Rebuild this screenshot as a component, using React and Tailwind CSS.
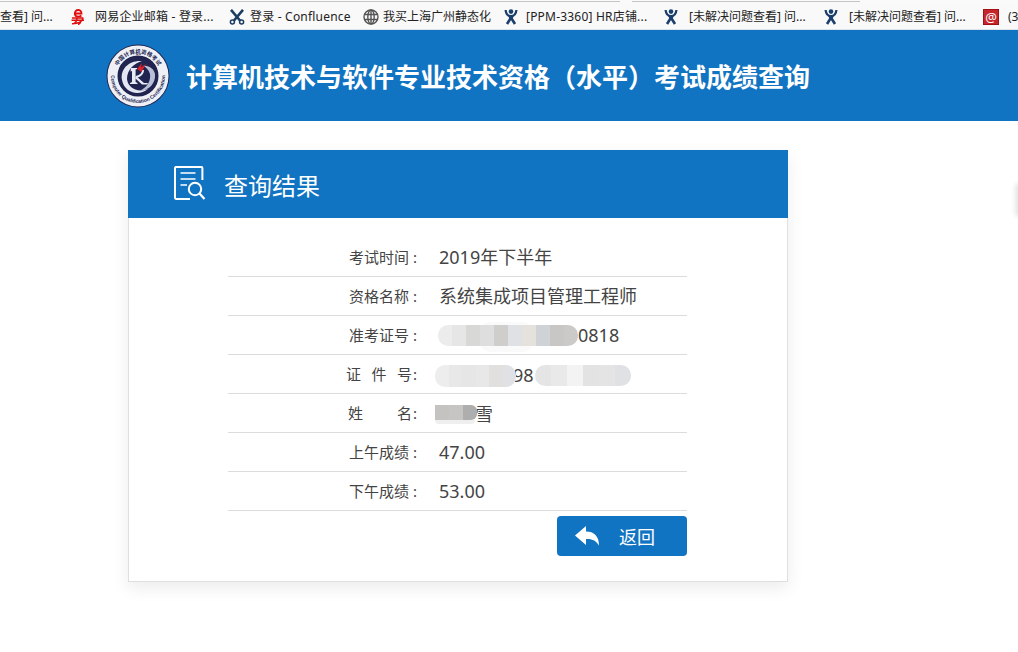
import React from "react";

const FONT = { fontFamily: '"Noto Sans", "Noto Sans CJK SC", sans-serif' };

function JiraIcon() {
  return (
    <svg width="14" height="16" viewBox="0 0 14 16">
      <circle cx="7" cy="2.6" r="2.3" fill="#1a3f6e" />
      <path d="M1.6 1 C2 5 4 7.2 7 7.2 C10 7.2 12 5 12.4 1" fill="none" stroke="#1a3f6e" strokeWidth="2.3" />
      <path d="M4.5 7 L9.5 7 L8.6 10.5 L5.4 10.5 Z" fill="#1a3f6e" />
      <path d="M6.5 9.5 L3 15 M7.5 9.5 L11 15" fill="none" stroke="#1a3f6e" strokeWidth="2.6" />
    </svg>
  );
}

function Mail163() {
  return (
    <svg width="14" height="16" viewBox="0 0 14 16" fill="none" stroke="#e00d0d">
      <path d="M4 4.5 H10.5 C10.5 2 9 1 7.2 1 C5 1 3.8 2.6 3.8 4.5 C3.8 6.4 5.2 7.6 7.2 7.6 C8.6 7.6 9.6 7.2 10.4 6.5" strokeWidth="1.8" />
      <path d="M1 9 H12.5 M0.5 11.2 H13 M1 14.8 C5 14.6 11 13.6 12 9.4 M6 9.2 C6 12 4 14 2 15 M10 11 C9.8 13 9 15 7 15.5" strokeWidth="1.5" />
    </svg>
  );
}

function ConfluenceIcon() {
  return (
    <svg width="16" height="16" viewBox="0 0 16 16" fill="none" stroke="#1c3d63">
      <path d="M2 0.8 L11 11.5 M14 0.8 L5 11.5" strokeWidth="2.6" />
      <circle cx="3.4" cy="13" r="2" strokeWidth="1.5" />
      <circle cx="12.6" cy="13" r="2" strokeWidth="1.5" />
    </svg>
  );
}

function GlobeIcon() {
  return (
    <svg width="16" height="16" viewBox="0 0 16 16" fill="none" stroke="#555" strokeWidth="1.4">
      <circle cx="8" cy="8" r="7" />
      <ellipse cx="8" cy="8" rx="3.2" ry="7" />
      <path d="M1 5.5 H15 M1 10.5 H15 M8 1 V15" />
    </svg>
  );
}

function AtIcon() {
  return (
    <div className="flex h-4 w-4 items-center justify-center border border-[#a01218] bg-[#c4262c] text-[13px] leading-none text-white">@</div>
  );
}

function Bookmark({ width, gap, icon, text, latin }) {
  return (
    <div className="flex shrink-0 items-center" style={{ width }}>
      <div className="flex shrink-0 justify-center">{icon}</div>
      <span className={latin ? "whitespace-nowrap tracking-[0.2px]" : "whitespace-nowrap"} style={{ marginLeft: gap }}>{text}</span>
    </div>
  );
}

function Logo() {
  return (
    <svg width="64" height="64" viewBox="0 0 64 64">
      <circle cx="32" cy="32" r="31.5" fill="#20244f" />
      <circle cx="32" cy="32" r="25.5" fill="none" stroke="#eef0f6" strokeWidth="10" />
      <circle cx="32" cy="32" r="20" fill="#20244f" />
      <path id="lgT" d="M9.5 32 A22.5 22.5 0 0 1 54.5 32" fill="none" stroke="none" />
      <path id="lgB" d="M5 32 A27 27 0 0 0 59 32" fill="none" stroke="none" />
      <text fontSize="5.5" fontWeight="700" fill="#20244f" fontFamily="Noto Sans CJK SC, sans-serif">
        <textPath href="#lgT" startOffset="50%" textAnchor="middle">中国计算机资格考试</textPath>
      </text>
      <text fontSize="5" fontWeight="700" fill="#20244f" fontFamily="Liberation Sans, sans-serif">
        <textPath href="#lgB" startOffset="50%" textAnchor="middle">Computer Qualification Certification</textPath>
      </text>
      <path d="M16 36 C14 25 23 16 36 17 C29 19 21 25 21 35 C22 44 31 49 42 45 C32 53 18 48 16 36 Z" fill="#e4e7f1" />
      <path d="M49 30 C50 39 43 47 33 47 C41 44 45 37 44 30 C43 26 40 23 37 22 C43 21 48 25 49 30 Z" fill="#b9bfd6" />
      <path d="M25 24 H31 V25 L29.6 25.6 V38 L31.5 39 V40 H24 V39 L26 38 V27 L24.5 27.5 Z" fill="#e8ebf4" />
      <path d="M30 32 L38 39 L42 39 L41 40.5 L36 40.5 L29 34 Z M30 32 C34 31 36 29 36 26 L38 26 C38 30 35 33 31 33.5 Z" fill="#e8ebf4" />
      <path d="M31 25 L36 19 L35 23.5 L40 20 L35.5 28 Z" fill="#d8232a" />
    </svg>
  );
}

function ResultIcon() {
  return (
    <svg width="32" height="36" viewBox="0 0 32 36" fill="none" stroke="#fff" strokeWidth="2">
      <path d="M16 33 H2.2 A1.2 1.2 0 0 1 1 31.8 V2 A1.2 1.2 0 0 1 2.2 0.9 H27.2 A1.2 1.2 0 0 1 28.4 2 V14" />
      <path d="M6.5 7 H21.5 M6.5 13 H21.5 M6.5 19 H13" strokeWidth="1.6" />
      <circle cx="21" cy="23" r="6.2" />
      <path d="M25.5 27.5 L30.5 33" strokeWidth="2.2" />
    </svg>
  );
}

function ReplyIcon() {
  return (
    <svg width="24" height="20" viewBox="0 0 24 20">
      <path d="M0 9.5 L11 0 V5.5 C19 5.5 24 10 24 19.5 C21 14.5 17 12.5 11 13 V19 Z" fill="#fff" />
    </svg>
  );
}

function Mosaic({ left, top, colors, cellW, height, radius = "rounded-[10px]" }) {
  return (
    <div className={`absolute flex overflow-hidden ${radius}`} style={{ left, top, height }}>
      {colors.map((c, i) => (
        <div key={i} style={{ width: cellW, background: c }} />
      ))}
    </div>
  );
}

function Row({ label, labelClass = "", colonClass = "w-[15px] pl-[4px]", value, children }) {
  return (
    <div className="relative flex h-[39px] items-center border-b border-[#dcdcdc]">
      <div className="flex w-[196px] justify-end whitespace-pre text-[15px] text-[#444]">
        <div className={`flex justify-between ${labelClass}`}>
          {label.map((t) => (
            <span key={t}>{t}</span>
          ))}
        </div>
        <span className={colonClass}>:</span>
      </div>
      <div className="ml-[15px] whitespace-nowrap text-[18px] text-[#444]">{value}</div>
      {children}
    </div>
  );
}

export default function App() {
  return (
    <div className="relative h-[652px] w-[1018px] overflow-hidden bg-white" style={FONT}>
      <div className="flex h-[2px] bg-[#fafafa]">
        <div className="w-[620px] border-b border-[#c4c4c4]" />
        <div className="ml-[12px] w-[228px] border-b border-[#c4c4c4]" />
      </div>
      <div className="flex h-[28px] items-center overflow-hidden border-b border-[#dde3ea] bg-[#f9f9f9] pt-[3px] text-[12px] text-[#222]">
        <Bookmark width={71} gap={0} icon={null} text="查看] 问..." />
        <Bookmark width={158} gap={10} icon={<Mail163 />} text="网易企业邮箱 - 登录..." latin />
        <Bookmark width={134} gap={5} icon={<ConfluenceIcon />} text="登录 - Confluence" latin />
        <Bookmark width={141} gap={4} icon={<GlobeIcon />} text="我买上海广州静态化" />
        <Bookmark width={160} gap={8} icon={<JiraIcon />} text="[PPM-3360] HR店铺..." latin />
        <Bookmark width={160} gap={11} icon={<JiraIcon />} text="[未解决问题查看] 问..." />
        <Bookmark width={159} gap={11} icon={<JiraIcon />} text="[未解决问题查看] 问..." />
        <Bookmark width={35} gap={9} icon={<AtIcon />} text="(3" />
      </div>

      <header className="flex h-[91px] items-center bg-[#1174c2] pl-[106px]">
        <Logo />
        <h1 className="ml-4 whitespace-nowrap pt-1 text-[26px] font-bold text-white">
          计算机技术与软件专业技术资格（水平）考试成绩查询
        </h1>
      </header>

      <main className="ml-[128px] mt-[29px] w-[660px] border border-t-0 border-[#dfdfdf] shadow-[0_6px_16px_rgba(0,0,0,0.08)]">
        <div className="-mx-px flex h-[68px] items-center bg-[#1174c2] pl-[46px]">
          <ResultIcon />
          <div className="ml-[18px] pt-[3px] text-[24px] text-white">查询结果</div>
        </div>
        <div className="ml-[99px] w-[459px] pt-5">
          <Row label={["考试时间"]} value="2019年下半年" />
          <Row label={["资格名称"]} value="系统集成项目管理工程师" />
          <Row label={["准考证号"]} value={<span className="ml-[139px]">0818</span>}>
            <Mosaic left={252} top={6} cellW={53} height={30} colors={["#fafafa"]} />
            <Mosaic left={210} top={9} cellW={14} height={21}
              colors={["#ececec", "#e6e6e6", "#d8d8d6", "#dedede", "#cfcecd", "#dfe1e4", "#e5e1dc", "#cfd3d5", "#c8c7c6", "#cbcac9"]} />
          </Row>
          <Row label={["证", "件", "号"]} labelClass="w-[66px]" colonClass="w-[12px] pl-[1px]" value="">
            <div className="absolute left-[285px] top-[7px] text-[18px] text-[#444]">98</div>
            <Mosaic left={207} top={10} cellW={13.5} height={22}
              colors={["#ededed", "#e8e8e8", "#e6e6e6", "#e8e8e8", "#e2e0df", "#dfe1e5"]} />
            <Mosaic left={307} top={10} cellW={16} height={21}
              colors={["#e5e5e5", "#e9e9e9", "#f3f3f3", "#e3e3e3", "#e4e4e4", "#dfe1e5"]} />
          </Row>
          <Row label={["姓", "名"]} labelClass="w-[64px]" colonClass="w-[12px] pl-[1px]" value="">
            <div className="absolute left-[247px] top-[7px] text-[18px] text-[#444]">雪</div>
            <Mosaic left={207} top={26} cellW={40} height={4} radius="rounded-b-[4px]" colors={["#efefef"]} />
            <Mosaic left={207} top={11} cellW={14} height={15} radius="rounded-r-[6px]"
              colors={["#c4c3c2", "#c6c5c4", "#aeaeae"]} />
          </Row>
          <Row label={["上午成绩"]} value="47.00" />
          <Row label={["下午成绩"]} value="53.00" />
          <div className="flex justify-end pb-[25px] pt-[5px]">
            <button className="flex h-10 w-[130px] items-center rounded-[4px] bg-[#1174c2] pl-[18px] text-white">
              <ReplyIcon />
              <span className="ml-[20px] pt-[2px] text-[18px]">返回</span>
            </button>
          </div>
        </div>
      </main>
      <div className="absolute right-[-6px] top-[183px] h-[34px] w-[9px] rounded-full bg-[#e6e6e6] blur-[2px]" />
    </div>
  );
}
